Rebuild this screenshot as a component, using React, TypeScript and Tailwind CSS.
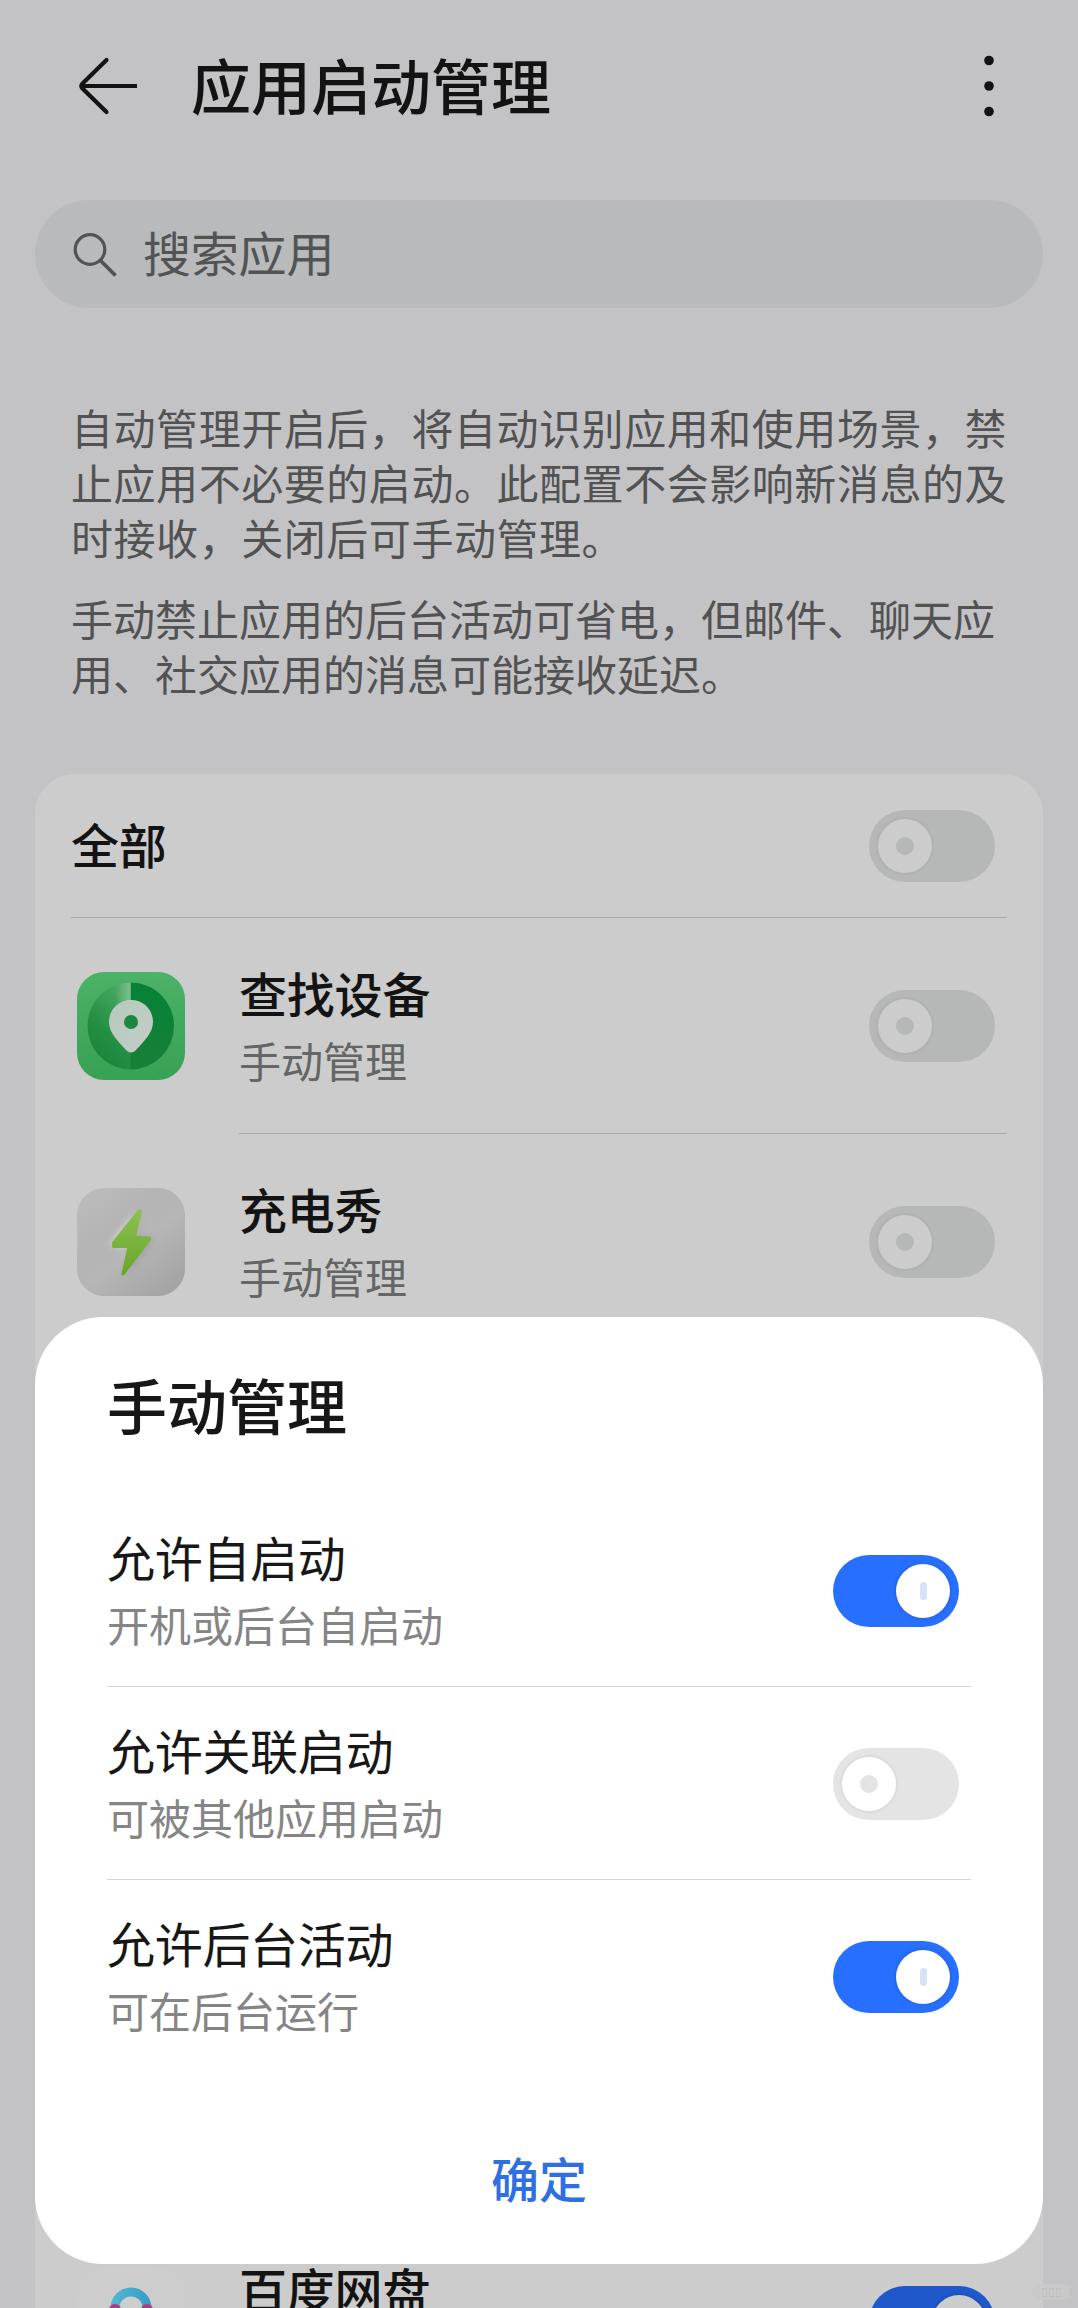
import React, { useState } from 'react';
import clsx from 'clsx';

type AppItem = {
  name: string;
  icon: React.ReactNode;
  auto: boolean;
};

const INTRO_LINES = [
  '自动管理开启后，将自动识别应用和使用场景，禁',
  '止应用不必要的启动。此配置不会影响新消息的及',
  '时接收，关闭后可手动管理。',
];

const POWER_LINES = [
  '手动禁止应用的后台活动可省电，但邮件、聊天应',
  '用、社交应用的消息可能接收延迟。',
];

const BackIcon = () => (
  <svg width="62" height="60" viewBox="0 0 62 60" fill="none" stroke="#131313" strokeWidth="4.2" strokeLinecap="round" strokeLinejoin="round">
    <path d="M29.5 4 L5.500 27.5 Q3 30 5.500 32.5 L29.5 56" />
    <path d="M5 30 H60" strokeLinecap="butt" />
  </svg>
);

const MoreIcon = () => (
  <svg width="12" height="62" viewBox="0 0 12 62" fill="#131313">
    <circle cx="6" cy="5.5" r="4.8" />
    <circle cx="6" cy="31" r="4.8" />
    <circle cx="6" cy="56.5" r="4.8" />
  </svg>
);

const SearchIcon = () => (
  <svg width="46" height="46" viewBox="0 0 46 46" fill="none" stroke="#525454" strokeWidth="3.2">
    <circle cx="17" cy="18.5" r="14.800" />
    <path d="M27.500 29.500 L42.500 44.500" strokeWidth="3.8" />
  </svg>
);

const FindDeviceIcon = () => (
  <svg width="108" height="108" viewBox="0 0 108 108">
    <defs>
      <linearGradient id="findBg" x1="0" y1="0" x2="0" y2="1">
        <stop offset="0" stopColor="#4bb267" />
        <stop offset="1" stopColor="#37a155" />
      </linearGradient>
      <linearGradient id="findLeft" x1="0" y1="1" x2="0.5" y2="0">
        <stop offset="0" stopColor="#168036" />
        <stop offset="0.5" stopColor="#238f43" />
        <stop offset="1" stopColor="#45a660" />
      </linearGradient>
      <linearGradient id="findRight" x1="0" y1="0" x2="0" y2="1">
        <stop offset="0" stopColor="#058236" />
        <stop offset="1" stopColor="#178138" />
      </linearGradient>
      <linearGradient id="findFlare" x1="0" y1="0" x2="1" y2="0">
        <stop offset="0" stopColor="#7dc08d" stopOpacity="0" />
        <stop offset="1" stopColor="#7dc08d" />
      </linearGradient>
      <linearGradient id="findPin" x1="0" y1="0" x2="1" y2="1">
        <stop offset="0" stopColor="#b5cabb" />
        <stop offset="1" stopColor="#c5cdc7" />
      </linearGradient>
    </defs>
    <rect width="108" height="108" rx="27" fill="url(#findBg)" />
    <path d="M54 10.500 A43.500 43.500 0 0 0 54 97.500 Z" fill="url(#findLeft)" />
    <path d="M53.500 10.500 A43.500 43.500 0 0 1 53.500 97.500 Z" fill="url(#findRight)" />
    <path d="M38 13.700 A43.500 43.500 0 0 1 53.700 10.500 V32 H38 Z" fill="url(#findFlare)" />
    <path d="M54 28 C41.500 28 32 37.500 32 50 C32 61 41 69 49 78 Q54 83 59 78 C67 69 76 61 76 50 C76 37.500 66.500 28 54 28 Z" fill="url(#findPin)" />
    <circle cx="54" cy="50" r="7" fill="#1d873d" />
  </svg>
);

const ChargeShowIcon = () => (
  <svg width="108" height="108" viewBox="0 0 108 108">
    <defs>
      <linearGradient id="chargeBg" x1="0.1" y1="0" x2="0.9" y2="1">
        <stop offset="0" stopColor="#bcbcbc" />
        <stop offset="0.35" stopColor="#b4b4b4" />
        <stop offset="0.55" stopColor="#b6b6b6" />
        <stop offset="1" stopColor="#a2a2a2" />
      </linearGradient>
      <linearGradient id="chargeBolt" x1="0" y1="0" x2="0" y2="1">
        <stop offset="0" stopColor="#8bc050" />
        <stop offset="1" stopColor="#69a728" />
      </linearGradient>
      <filter id="chargeBlur" x="-40%" y="-40%" width="180%" height="180%">
        <feGaussianBlur stdDeviation="3.500" />
      </filter>
    </defs>
    <rect width="108" height="108" rx="27" fill="url(#chargeBg)" />
    <path d="M58 24 L32 57 L49 61 L42 84 Z" fill="#d2d2d2" filter="url(#chargeBlur)" />
    <path d="M66 26 L58 48 L77 51 L50 88 L55 62 Z" fill="#8d8d8d" opacity="0.500" filter="url(#chargeBlur)" />
    <path
      d="M62 23 L36.500 55 V58.500 L52 58.500 L46 86 L72.500 51.500 V50 L57.500 49 L63.500 23 Z"
      fill="url(#chargeBolt)"
      stroke="url(#chargeBolt)"
      strokeWidth="3"
      strokeLinejoin="round"
    />
  </svg>
);

const NetdiskIcon = () => (
  <svg width="108" height="108" viewBox="0 0 108 108">
    <defs>
      <linearGradient id="diskRing" x1="0" y1="0" x2="1" y2="0">
        <stop offset="0" stopColor="#4fb4d2" />
        <stop offset="1" stopColor="#3a9fc6" />
      </linearGradient>
    </defs>
    <rect width="108" height="108" rx="27" fill="#cdcdce" />
    <path d="M38 42 V40 A16 16 0 0 1 70 40 V42" fill="none" stroke="url(#diskRing)" strokeWidth="9" />
    <circle cx="38" cy="42" r="6" fill="#b03a86" />
    <circle cx="70" cy="42" r="6" fill="#b03a86" />
  </svg>
);

const APPS: AppItem[] = [
  { name: '查找设备', icon: <FindDeviceIcon />, auto: false },
  { name: '充电秀', icon: <ChargeShowIcon />, auto: false },
];

const OPTIONS = [
  { title: '允许自启动', desc: '开机或后台自启动', enabled: true },
  { title: '允许关联启动', desc: '可被其他应用启动', enabled: false },
  { title: '允许后台活动', desc: '可在后台运行', enabled: true },
];

const Toggle = ({ on, dimmed = false, onChange }: { on: boolean; dimmed?: boolean; onChange?: () => void }) => (
  <button
    role="switch"
    aria-checked={on}
    onClick={onChange}
    className={clsx(
      'mt-px flex h-[72px] w-[126px] shrink-0 items-center rounded-full px-[9px]',
      on ? 'justify-end' : 'justify-start',
      on && (dimmed ? 'bg-[#1f58cb]' : 'bg-[#276fff]'),
      !on && (dimmed ? 'bg-[#b6b7b7]' : 'bg-[#e4e4e4]')
    )}
  >
    <span
      className={clsx(
        'flex size-[54px] items-center justify-center rounded-full',
        dimmed ? 'bg-[#cccccc]' : 'bg-white',
        on ? 'shadow-[0_0_3px_1px_rgba(0,0,0,0.12)]' : 'shadow-[0_0_2px_2px_rgba(0,0,0,0.035)]'
      )}
    >
      {on ? (
        <span className={clsx('h-[18px] w-[7px] rounded-full', dimmed ? 'bg-[#a9b5cb]' : 'bg-[#d5e2f7]')} />
      ) : (
        <span className={clsx('size-[18px] rounded-full', dimmed ? 'bg-[#b6b7b7]' : 'bg-[#e4e4e4]')} />
      )}
    </span>
  </button>
);

const AppRow = ({ app, divider }: { app: AppItem; divider?: boolean }) => (
  <div className="flex h-[216px] pl-[42px]">
    <div className="flex w-[162px] shrink-0 items-center">{app.icon}</div>
    <div
      className={clsx(
        'mr-9 flex flex-1 items-center justify-between border-b pr-3',
        divider ? 'border-[#a9aaaa]' : 'border-transparent'
      )}
    >
      <div className="pb-[4px]">
        <div className="text-[48px] leading-[58px] font-medium tracking-[-0.2px] text-[#131313]">{app.name}</div>
        <div className="mt-[14px] text-[42px] leading-[50px] text-[#646565]">手动管理</div>
      </div>
      <Toggle on={app.auto} dimmed />
    </div>
  </div>
);

const ManualSheet = () => {
  const [options, setOptions] = useState(OPTIONS);

  const toggleOption = (index: number) => {
    setOptions((prev) => prev.map((o, i) => (i === index ? { ...o, enabled: !o.enabled } : o)));
  };

  return (
    <section className="absolute inset-x-[35px] bottom-[44px] flex h-[947px] flex-col rounded-[68px] bg-white px-[72px]">
      <h2 className="flex h-[177px] items-center pb-[3px] text-[60px] leading-[72px] font-medium text-[#171717]">
        手动管理
      </h2>
      {options.map((option, i) => (
        <div
          key={option.title}
          className={clsx(
            'flex h-[193px] items-center justify-between border-b pr-3',
            i < options.length - 1 ? 'border-[#d6d6d6]' : 'border-transparent'
          )}
        >
          <div className="pb-[5px]">
            <div className="text-[48px] leading-[58px] tracking-[-0.3px] text-[#171717]">{option.title}</div>
            <div className="mt-[14px] text-[42px] leading-[50px] text-[#858585]">{option.desc}</div>
          </div>
          <Toggle on={option.enabled} onChange={() => toggleOption(i)} />
        </div>
      ))}
      <button className="mt-[72px] self-center text-[48px] leading-[64px] font-medium text-[#2f6fe4]">确定</button>
    </section>
  );
};

export default function App() {
  return (
    <div className="relative h-[2308px] w-[1078px] overflow-hidden bg-[#c3c3c5] font-['Noto_Sans_CJK_SC',sans-serif]">
      <header className="flex h-[172px] items-center pr-[83px] pl-[77px]">
        <BackIcon />
        <h1 className="ml-[52px] flex-1 pb-[5px] text-[60px] leading-[72px] font-medium text-[#131313]">应用启动管理</h1>
        <MoreIcon />
      </header>

      <div className="mx-[35px] mt-[28px] flex h-[108px] items-center rounded-full bg-[#b8babb] pl-[38px]">
        <SearchIcon />
        <span className="ml-[24px] pb-[6px] text-[48px] leading-[58px] tracking-[-0.2px] text-[#525454]">搜索应用</span>
      </div>

      <div className="mt-[91px] pl-[71px] text-[42px] leading-[55px] whitespace-nowrap text-[#525253]">
        <p className="tracking-[0.55px]">
          {INTRO_LINES.map((line) => (
            <span key={line} className="block">{line}</span>
          ))}
        </p>
        <p className="mt-[26px]">
          {POWER_LINES.map((line) => (
            <span key={line} className="block">{line}</span>
          ))}
        </p>
      </div>

      <main className="mx-[35px] mt-[74px] rounded-t-[40px] bg-[#cccccc]">
        <div className="mr-9 ml-9 flex h-[144px] items-center justify-between border-b border-[#a9aaaa] pr-3">
          <span className="pb-[5px] text-[48px] leading-[58px] font-medium tracking-[-0.2px] text-[#131313]">全部</span>
          <Toggle on={false} dimmed />
        </div>
        {APPS.map((app) => (
          <AppRow key={app.name} app={app} divider />
        ))}
        {/* rows that sit fully behind the sheet */}
        <div className="h-[864px]" />
        <AppRow app={{ name: '百度网盘', icon: <NetdiskIcon />, auto: true }} />
      </main>

      <ManualSheet />

      <div className="absolute right-[8px] bottom-[8px] flex h-[16px] w-[38px] items-center justify-center gap-[2px] rounded-full bg-[#c9c9ca]">
        <span className="h-[9px] w-[5px] border border-[#c1c1c3]" />
        <span className="h-[9px] w-[5px] border border-[#c1c1c3]" />
        <span className="h-[9px] w-[5px] border border-[#c1c1c3]" />
      </div>
    </div>
  );
}
